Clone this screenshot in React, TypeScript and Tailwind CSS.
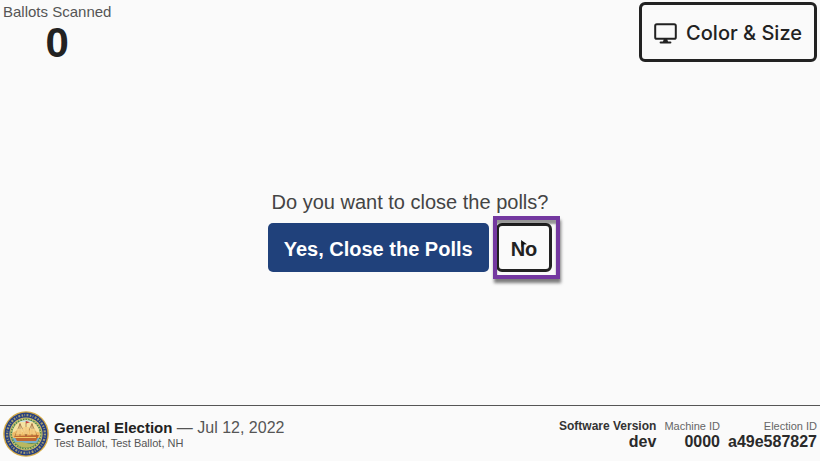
function MonitorIcon() {
  return (
    <svg viewBox="0 0 23 21" className="h-[21px] w-[23px] shrink-0" fill="none" stroke="currentColor" aria-hidden="true">
      <rect x="1.2" y="1.2" width="20.6" height="14.6" rx="1.6" strokeWidth="2" />
      <path d="M9.8 16h3.4l.9 3H8.9z" fill="currentColor" stroke="none" />
      <path d="M6.6 19.4h9.8" strokeWidth="2" strokeLinecap="round" />
    </svg>
  );
}

function StateSeal() {
  return (
    <svg viewBox="0 0 46 46" className="size-[46px] shrink-0" role="img" aria-label="State seal">
      <circle cx="23" cy="23" r="22.8" fill="#d3a944" />
      <circle cx="23" cy="23" r="21.4" fill="#263f80" />
      <circle cx="23" cy="23" r="18.9" fill="none" stroke="#a39c70" strokeWidth="2.2" strokeDasharray="1.5 1.3 0.8 1.5 1.9 1.4" />
      <circle cx="23" cy="23" r="16.6" fill="#dcc068" />
      <circle cx="23" cy="23" r="15.6" fill="#4a8050" />
      <circle cx="23" cy="23" r="14.8" fill="none" stroke="#c0c878" strokeWidth="1.5" strokeDasharray="1.4 1.3" />
      <clipPath id="seal-scene">
        <circle cx="23" cy="23" r="13.8" />
      </clipPath>
      <g clipPath="url(#seal-scene)">
        <rect x="9" y="9" width="28" height="17" fill="#f5e2a2" />
        <path d="M9 14l5-3h18l5 3V8H9z" fill="#c9e1e4" />
        <path d="M9 22l6-3 5 2 6-3 12 4v5H9z" fill="#eebb68" />
        <rect x="9" y="27" width="28" height="5" fill="#78b0cc" />
        <path d="M9 32q7-2 14 0t14-1v8H9z" fill="#b9b860" />
        <path d="M11 25l25-1-3 6H14z" fill="#c06832" />
        <path d="M12 26.5h21" stroke="#f3c868" strokeWidth="1" />
        <path d="M17 12v13M23 10v15M29 12v13M12 25l5-12 6 12 6-12 5 12" fill="none" stroke="#9a643a" strokeWidth="0.7" />
        <path d="M14 18h6l-1 5h-6zM20 16h6v7h-6zM27 18h5l1 5h-6z" fill="#f6cf85" opacity="0.85" />
        <path d="M23 10l4 1.2-4 1.3z" fill="#c94141" />
      </g>
    </svg>
  );
}

function Detail({ label, value, strong = false }: { label: string; value: string; strong?: boolean }) {
  return (
    <div className="text-right">
      <dt className={strong ? "text-[12px] leading-4 font-bold text-[#333]" : "text-[11px] leading-4 text-[#666]"}>{label}</dt>
      <dd className="text-[16px] leading-4 font-bold text-[#2a2a2a]">{value}</dd>
    </div>
  );
}

export default function App() {
  return (
    <div className="flex min-h-screen flex-col bg-[#fafafa] font-['Liberation_Sans',Arial,sans-serif] text-[#222]">
      <header className="flex items-start justify-between px-[3px] pt-0.5">
        <div className="text-center">
          <div className="text-[15px] leading-5 text-[#555]">Ballots Scanned</div>
          <div className="text-[42px] leading-[42px] font-bold">0</div>
        </div>
        <button
          type="button"
          className="flex h-[60px] items-center gap-[9px] rounded-md border-3 border-[#222] px-3 pt-0.5 font-['Inter','Liberation_Sans',sans-serif] text-[20px] font-medium"
        >
          <MonitorIcon />
          Color &amp; Size
        </button>
      </header>

      <main className="flex flex-1 flex-col items-center justify-center pb-[7px]">
        <p className="mb-[9px] text-[20px] leading-6 text-[#444]">Do you want to close the polls?</p>
        <div className="flex gap-[7px]">
          <button type="button" className="h-[49px] rounded-[5px] bg-[#20417b] px-4 pt-0.5 text-[20px] font-bold text-white">
            Yes, Close the Polls
          </button>
          <div className="relative">
            <button type="button" className="h-[49px] rounded-md border-3 border-[#222] px-3 pt-0.5 text-[20px] font-bold">
              No
            </button>
            <div className="pointer-events-none absolute -top-[7px] -right-2 -bottom-[7px] -left-[3px] border-4 border-[#7438a0] shadow-[1px_4px_3px_rgba(0,0,0,0.5),inset_0_4px_2px_rgba(0,0,0,0.4)]" />
            <svg viewBox="0 0 7 8" className="pointer-events-none absolute top-[17px] left-6 h-2 w-[7px]" aria-hidden="true">
              <path d="M1 0l6 4.2-3.4.4L1.6 7.5z" fill="#111" />
            </svg>
          </div>
        </div>
      </main>

      <footer className="flex items-center justify-between border-t border-[#555] px-[3px] pt-[5px] pb-1">
        <div className="flex items-center gap-[5px]">
          <StateSeal />
          <div>
            <div className="text-[16px] leading-[18px] text-[#555]">
              <strong className="text-[15px] text-[#222]">General Election</strong> — Jul 12, 2022
            </div>
            <div className="text-[11px] leading-3 text-[#555]">Test Ballot, Test Ballot, NH</div>
          </div>
        </div>
        <dl className="flex items-center gap-2">
          <Detail label="Software Version" value="dev" strong />
          <Detail label="Machine ID" value="0000" />
          <Detail label="Election ID" value="a49e587827" />
        </dl>
      </footer>
    </div>
  );
}
